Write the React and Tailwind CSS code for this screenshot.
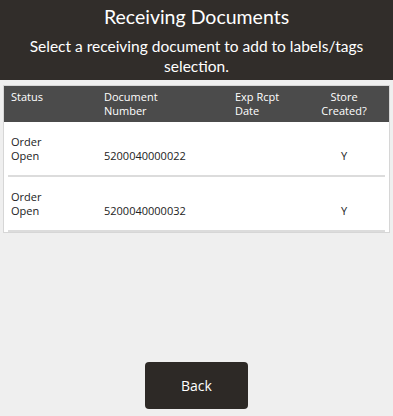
const rows = [
  { status: ['Order', 'Open'], number: '5200040000022', date: '', created: 'Y' },
  { status: ['Order', 'Open'], number: '5200040000032', date: '', created: 'Y' },
]

const cols = 'grid grid-cols-[93px_131px_71px_76px]'

export default function App() {
  return (
    <div className="w-[393px] h-[416px] bg-[#efefef] flex flex-col text-[#222] font-['Open_Sans',sans-serif]">
      <div className="bg-[#312d2a] text-white text-center pt-[3px] pb-[4px] font-['Lato',sans-serif]">
        <h1 className="text-[19.5px] leading-[28px]">Receiving Documents</h1>
        <p className="text-[15.5px] leading-[20px] mt-[5px] px-4">
          Select a receiving document to add to labels/tags selection.
        </p>
      </div>

      <div className="mx-[3px] mt-[5px] border border-[#d6d6d6] bg-white">
        <div className={`${cols} bg-[#4b4b4b] text-white text-[11px] leading-[14px] px-[7px] pt-[4px] pb-[4px]`}>
          <div>Status</div>
          <div>Document<br />Number</div>
          <div>Exp Rcpt<br />Date</div>
          <div className="text-center">Store<br />Created?</div>
        </div>
        {rows.map((r) => (
          <div key={r.number} className="mx-[4px] border-b-2 border-[#dcdcdc]">
            <div className={`${cols} items-end text-[11px] leading-[14px] px-[3px] pt-[13px] pb-[12px]`}>
              <div>{r.status[0]}<br />{r.status[1]}</div>
              <div>{r.number}</div>
              <div>{r.date}</div>
              <div className="text-center">{r.created}</div>
            </div>
          </div>
        ))}
      </div>

      <div className="flex-1" />
      <div className="flex justify-center pb-[7px]">
        <button className="w-[103px] h-[47px] rounded-[4px] bg-[#2d2926] text-white text-[14px]">
          Back
        </button>
      </div>
    </div>
  )
}
